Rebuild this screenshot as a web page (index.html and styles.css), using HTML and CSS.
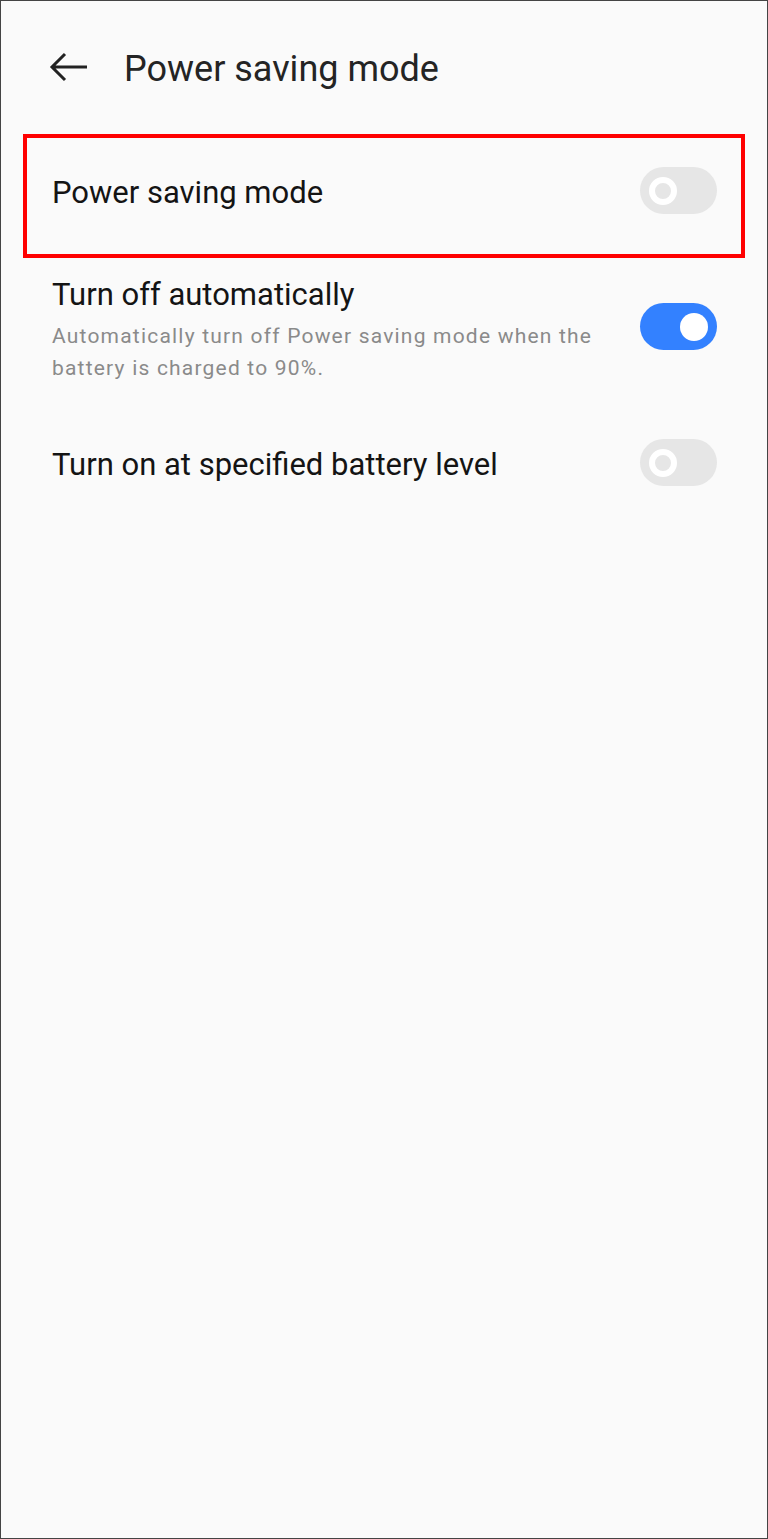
FILE: index.html
```html
<!DOCTYPE html>
<html lang="en">
  <head>
    <meta charset="UTF-8" />
    <meta name="viewport" content="width=device-width, initial-scale=1.0" />
    <title>Power saving mode</title>
    <link rel="stylesheet" href="styles.css">
  </head>
  <body>
    <div id="screen">
      <div id="header">
        <svg class="back" width="40" height="30" viewBox="0 0 40 30">
          <path d="M3 15 H38 M16 2 L3 15 L16 28" fill="none" stroke="#222" stroke-width="3" stroke-linejoin="miter" />
        </svg>
        <h1>Power saving mode</h1>
      </div>

      <div id="settings">
        <div class="row highlighted">
          <span class="label">Power saving mode</span>
          <span class="switch"></span>
        </div>

        <div class="row with-summary">
          <div class="text">
            <div class="label">Turn off automatically</div>
            <div class="summary">Automatically turn off Power saving mode when the battery is charged to 90%.</div>
          </div>
          <span class="switch on"></span>
        </div>

        <div class="row last">
          <span class="label">Turn on at specified battery level</span>
          <span class="switch"></span>
        </div>
      </div>
    </div>
  </body>
</html>
```

FILE: styles.css
```css
/* Global styles */
html,
body {
  margin: 0;
  height: 100%;
}

body {
  font-family: Roboto, "Noto Sans", sans-serif;
  background-color: #fafafa;
  color: #141414;
}

#screen {
  box-sizing: border-box;
  height: 100%;
  border: 1px solid #444444;
}

/* Header */
#header {
  display: flex;
  align-items: center;
  height: 44px;
  padding: 46px 0 0 48px;
}

#header .back {
  margin-bottom: 4px;
  margin-right: 35px;
}

#header h1 {
  margin: 0;
  font-size: 36px;
  font-weight: 400;
  line-height: 44px;
  color: #242424;
}

/* Settings list */
#settings {
  margin-top: 43px;
}

.row {
  display: flex;
  align-items: center;
  justify-content: space-between;
  padding: 0 50px 0 51px;
}

.row .label {
  font-size: 31px;
  line-height: 36px;
  padding-top: 4px;
}

.row.highlighted {
  margin: 0 22px;
  padding: 29px 24px 40px 25px;
  border: 4px solid #ff0000;
}

.row.with-summary {
  align-items: flex-start;
  padding-top: 19px;
  padding-bottom: 27px;
}

.row.with-summary .label {
  padding-top: 0;
}

.row.with-summary .switch {
  margin-top: 26px;
}

.summary {
  max-width: 575px;
  margin-top: 7px;
  font-size: 21px;
  line-height: 32px;
  letter-spacing: 1.2px;
  color: #8a8a8a;
}

.row.last {
  padding-top: 28px;
}

/* Switch */
.switch {
  position: relative;
  flex-shrink: 0;
  width: 77px;
  height: 47px;
  border-radius: 24px;
  background-color: #e6e6e6;
}

.switch::after {
  content: "";
  position: absolute;
  top: 9.5px;
  left: 9px;
  box-sizing: border-box;
  width: 28px;
  height: 28px;
  border-radius: 50%;
  border: 6px solid #ffffff;
}

.switch.on {
  background-color: #3381ff;
}

.switch.on::after {
  left: 40px;
  border: none;
  background-color: #ffffff;
}
```
